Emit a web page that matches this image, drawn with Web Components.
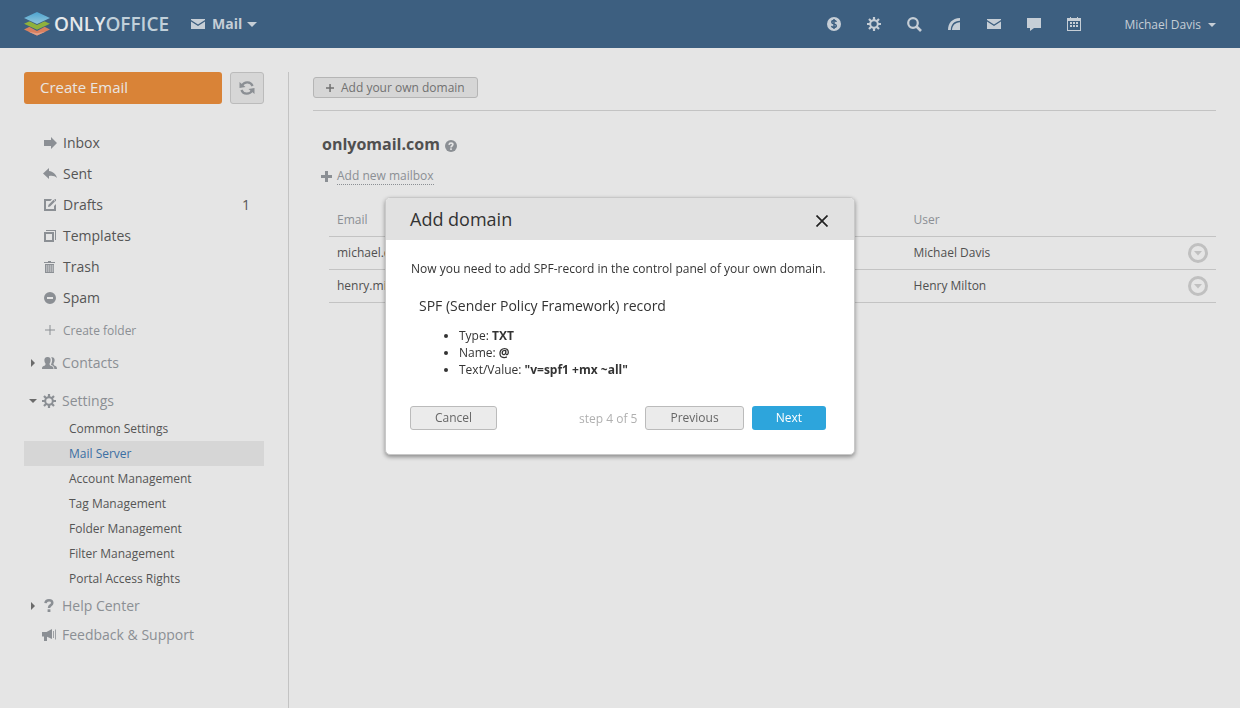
<!DOCTYPE html>
<html lang="en">
<head>
<meta charset="utf-8">
<title>Mail</title>
<style>
  body {
    margin: 0;
    background: #e5e5e5;
    color: #505050;
    font: 12px/17px "Open Sans", "Liberation Sans", sans-serif;
  }
</style>
</head>
<body>
<mail-app></mail-app>

<script>
// ---------- icons
const ICONS = {
  logo: ["0 0 26 24", `<path d="M0 17.500 13 11l13 6.500L13 23.500z" fill="#d9805f"/><path d="M4 19.400 13 23.500l9-4.100-9 1.800z" fill="#e0a08a"/><path d="M0 12 13 19 26 12 13 6z" fill="#3d5f80"/><path d="M0 11.800 13 17.800 26 11.800 13 6z" fill="#8fb13c"/><path d="M0 6.500 13 13 26 6.500 13 .5z" fill="#3d5f80"/><path d="M0 6 13 12 26 6 13 0z" fill="url(#blue)"/><defs><linearGradient id="blue" x2="0" y2="1"><stop stop-color="#4da3cf"/><stop offset="1" stop-color="#92c7dc"/></linearGradient></defs>`],
  mail: ["0 0 14 10", `<path d="M0 0h14v1L7 5.500 0 1zM0 2.500 7 7l7-4.500V10H0z"/>`],
  down: ["0 0 10 5", `<path d="M0 0h10L5 5z"/>`],
  smalldown: ["0 0 8 4", `<path d="M0 0h8L4 4z"/>`],
  dollar: ["0 0 14 14", `<circle cx="7" cy="7" r="7"/><path d="M9.300 5C9 3.900 8 3.600 7 3.600c-1.200 0-2.200.6-2.200 1.600C4.800 7.400 9.300 6.300 9.300 8.700c0 1.100-1 1.700-2.300 1.700S4.800 9.900 4.600 8.800M7 2v10" fill="none" stroke="#3d5f80" stroke-width="1.500"/>`],
  gear: ["0 0 14 14", `<circle cx="7" cy="7" r="3.800" fill="none" stroke="currentColor" stroke-width="2"/><path d="M7 0v3M7 11v3M0 7h3M11 7h3M2 2l2.200 2.200M9.800 9.800 12 12M12 2 9.800 4.200M4.200 9.800 2 12" fill="none" stroke="currentColor" stroke-width="2.200"/>`],
  search: ["0 0 15 15", `<circle cx="6" cy="6" r="4.800" fill="none" stroke="currentColor" stroke-width="2.200"/><path d="m9.500 9.500 4.500 4.500" stroke="currentColor" stroke-width="2.600"/>`],
  feed: ["0 0 12 12", `<path d="M0 12C0 5 4 .5 12 0v2.800C6 3 3 6.500 2.800 12zM4 12c.3-4.500 3-7.500 8-7.800V12z"/>`],
  chat: ["0 0 14 13", `<path d="M0 0h14v10H7l-4 3v-3H0z"/>`],
  calendar: ["0 0 14 14", `<path d="M0 1h3V0h1v1h6V0h1v1h3v13H0zm1 3v9h12V4z" fill-rule="evenodd"/><path d="M3 5h2v2H3zM6 5h2v2H6zM9 5h2v2H9zM3 8h2v2H3zM6 8h2v2H6zM9 8h2v2H9z"/>`],
  refresh: ["0 0 16 16", `<path d="M3 5.500A5.800 5.800 0 0 1 13.600 6M13 10.500A5.800 5.800 0 0 1 2.400 10" fill="none" stroke="currentColor" stroke-width="2.200"/><path d="M.5 2v6l6-1zM15.500 14V8l-6 1z"/>`],
  inbox: ["0 0 14 12", `<path d="M1 3h7V0l6 6-6 6V9H1z"/>`],
  sent: ["0 0 14 12", `<path d="M0 5.500 6 0v3c4 .5 7 3 8 7-2-2-4.500-2.500-8-2v3z"/>`],
  drafts: ["0 0 12 12", `<path d="M8 0H0v12h12V5l-2 2v3H2V2h4.500z"/><path d="m4 8 .5-2.200L9.500.8 11 2.400 6 7.400zM10 .4 12 0v2l-.4.400z"/>`],
  templates: ["0 0 12 12", `<path d="M2 0h10v10h-1V1H2zM0 2h10v10H0zm2 2v6h6V4z" fill-rule="evenodd"/>`],
  trash: ["0 0 12 12", `<path d="M4 0h3v1h4v1H0V1h4z"/><path d="M1 3h9v9H1zm1.500 1v7h.7V4zm2 0v7h.7V4zm2 0v7h.7V4zm2 0v7h.7V4z" fill-rule="evenodd"/>`],
  spam: ["0 0 12 12", `<path d="M6 0a6 6 0 1 0 0 12A6 6 0 0 0 6 0zM3 5h6v2H3z" fill-rule="evenodd"/>`],
  thinplus: ["0 0 10 10", `<path d="M4.500 0h1v4.500H10v1H5.500V10h-1V5.500H0v-1h4.500z"/>`],
  plus: ["0 0 8 8", `<path d="M3.300 0h1.500v3.300H8v1.500H4.800V8H3.300V4.800H0V3.300h3.300z"/>`],
  boldplus: ["0 0 11 11", `<path d="M4 0h3v4h4v3H7v4H4V7H0V4h4z"/>`],
  contacts: ["0 0 15 12", `<path d="M5.500 0C8 0 8.800 1.400 8.600 3.500 8.500 5 8 6 7.500 6.700c0 1.300.6 1.800 2 2.300 1.400.5 2 1 2 3H0c0-2 .4-2.500 1.600-3 1.400-.5 2-1 2-2.300C3 6 2.500 5 2.400 3.500 2.300 1.300 3.200 0 5.500 0z"/><path d="M9 .3c2.500-.6 3.800.8 3.600 3.200-.1 1.500-.6 2.300-1.100 2.900 0 1.300.4 1.800 1.500 2.300 1.400.6 2 1.300 2 3.300h-2.700c0-2.400-.8-3.200-3.300-4 0-.9 1-2.200 1.100-4.200C10.200 2.200 9.900 1 9 .3z"/>`],
  help: ["0 0 10 13", `<path d="M1.500 4.200C1.700 2.300 3 1.300 5 1.300s3.300 1 3.300 2.600C8.300 6.300 5 6 5 9" fill="none" stroke="currentColor" stroke-width="2.500"/><path d="M3.600 10.300h2.800V13H3.600z"/>`],
  horn: ["0 0 14 12", `<path d="M0 3h4.500L10 0v10L5 7.800V12H2V7.500H0z"/><path d="M11.500 2v7M13.500 .5v10" stroke="currentColor" stroke-width=".8" fill="none"/>`],
  right: ["0 0 4 8", `<path d="M0 0v8l4-4z"/>`],
  question: ["0 0 12 12", `<circle cx="6" cy="6" r="6"/><path d="M4 4.800C4.200 3.500 5 3.100 6 3.100s1.900.6 1.900 1.500C7.900 6 6 6 6 7.400M6 8.300V10" fill="none" stroke="#e5e5e5" stroke-width="1.600"/>`],
  action: ["0 0 20 20", `<circle cx="10" cy="10" r="8.500" fill="none" stroke="currentColor" stroke-width="3"/><path d="M6 8h8l-4 4.500z"/>`],
  close: ["0 0 12 12", `<path d="m.5.500 11 11M11.500.500.5 11.500" fill="none" stroke="currentColor" stroke-width="1.700"/>`]
};

class UiIcon extends HTMLElement {
  constructor() {
    super();
    const [box, shapes] = ICONS[this.getAttribute("name")];
    const [, , w, h] = box.split(" ");
    this.attachShadow({ mode: "open" }).innerHTML = `
      <style>
        :host { display: inline-flex; flex: none; align-items: center; justify-content: center; }
        svg { display: block; fill: currentColor; }
      </style>
      <svg width="${w}" height="${h}" viewBox="${box}" aria-hidden="true">${shapes}</svg>`;
  }
}
customElements.define("ui-icon", UiIcon);

// ---------- top bar
class TopBar extends HTMLElement {
  constructor() {
    super();
    this.attachShadow({ mode: "open" }).innerHTML = `
      <style>
        :host { display: flex; align-items: center; height: 48px; padding: 0 24px; background: #3d5f80; color: #c6ced6; }
        a { display: flex; align-items: center; color: inherit; text-decoration: none; }
        .logo { gap: 4px; font-size: 19px; line-height: 24px; font-weight: 600; }
        .logo b { font-weight: 600; color: #e5e8eb; }
        .logo span { color: #c1d0da; }
        .module { gap: 7px; margin-left: 22px; font-size: 14px; font-weight: 700; line-height: 20px; }
        .module ui-icon:last-child { margin-left: -2px; }
        nav { display: flex; margin-left: auto; }
        nav a { justify-content: center; width: 40px; height: 48px; }
        .user { gap: 7px; margin-left: 30px; padding-top: 2px; line-height: 20px; }
      </style>
      <a class="logo" href="#"><ui-icon name="logo"></ui-icon><div><b>ONLY</b><span>OFFICE</span></div></a>
      <a class="module" href="#"><ui-icon name="mail"></ui-icon>Mail<ui-icon name="down"></ui-icon></a>
      <nav>
        <a href="#" aria-label="Payments"><ui-icon name="dollar"></ui-icon></a>
        <a href="#" aria-label="Settings"><ui-icon name="gear"></ui-icon></a>
        <a href="#" aria-label="Search"><ui-icon name="search"></ui-icon></a>
        <a href="#" aria-label="Feed"><ui-icon name="feed"></ui-icon></a>
        <a href="#" aria-label="Mail"><ui-icon name="mail"></ui-icon></a>
        <a href="#" aria-label="Talk"><ui-icon name="chat"></ui-icon></a>
        <a href="#" aria-label="Calendar"><ui-icon name="calendar"></ui-icon></a>
      </nav>
      <a class="user" href="#">Michael Davis<ui-icon name="smalldown"></ui-icon></a>`;
  }
}
customElements.define("top-bar", TopBar);

// ---------- one line of the side menu
class MenuItem extends HTMLElement {
  constructor() {
    super();
    const icon = this.getAttribute("icon");
    const arrow = this.getAttribute("arrow");
    this.attachShadow({ mode: "open" }).innerHTML = `
      <style>
        :host { display: block; font-size: 14px; }
        a { display: flex; align-items: center; height: 31px; padding: 0 14px 0 16px; color: #555; text-decoration: none; }
        .icon { width: 20px; margin-right: 3px; color: #8b8f94; }
        .count { margin-left: auto; }
        .arrow { display: none; width: 17px; color: #6b6b6b; }
        :host([kind="group"]) a { height: 29px; padding-left: 0; color: #8b8f94; }
        :host([kind="group"]) .arrow { display: flex; justify-content: center; }
        :host([kind="group"]) .icon { width: 16px; margin-right: 5px; }
        :host([kind="add"]) { font-size: 12px; }
        :host([kind="add"]) a { height: 34px; color: #8b8f94; }
        :host([kind="sub"]) { font-size: 12px; }
        :host([kind="sub"]) a { height: 25px; padding-left: 45px; }
        :host([active]) a { background: #d6d6d6; color: #3b6fa3; }
      </style>
      <a href="#">
        <span class="arrow">${arrow ? `<ui-icon name="${arrow}"></ui-icon>` : ""}</span>
        ${icon ? `<ui-icon class="icon" name="${icon}"></ui-icon>` : ""}
        <slot></slot>
        <span class="count"><slot name="count"></slot></span>
      </a>`;
  }
}
customElements.define("menu-item", MenuItem);

class SideBar extends HTMLElement {
  constructor() {
    super();
    this.attachShadow({ mode: "open" }).innerHTML = `
      <style>
        :host { display: block; box-sizing: border-box; width: 265px; padding-right: 24px; border-right: 1px solid #c3c3c3; }
        .actions { display: flex; gap: 8px; margin-bottom: 23px; }
        button { box-sizing: border-box; height: 32px; border-radius: 3px; font-family: inherit; }
        .create { flex: 1; padding: 0 16px 2px; border: 0; background: #d98337; color: #e9e5e1; font-size: 15px; text-align: left; }
        .refresh { display: flex; align-items: center; justify-content: center; width: 34px; padding: 0; border: 1px solid #bbb; background: #d6d6d6; color: #8b8f94; }
        .contacts { margin: 1px 0 9px; }
        .settings { margin-bottom: 1px; }
      </style>
      <div class="actions">
        <button class="create">Create Email</button>
        <button class="refresh" aria-label="Refresh"><ui-icon name="refresh"></ui-icon></button>
      </div>
      <nav>
        <menu-item icon="inbox">Inbox</menu-item>
        <menu-item icon="sent">Sent</menu-item>
        <menu-item icon="drafts">Drafts<span slot="count">1</span></menu-item>
        <menu-item icon="templates">Templates</menu-item>
        <menu-item icon="trash">Trash</menu-item>
        <menu-item icon="spam">Spam</menu-item>
        <menu-item kind="add" icon="thinplus">Create folder</menu-item>
        <menu-item class="contacts" kind="group" icon="contacts" arrow="right">Contacts</menu-item>
        <menu-item class="settings" kind="group" icon="gear" arrow="smalldown">Settings</menu-item>
        <menu-item kind="sub">Common Settings</menu-item>
        <menu-item kind="sub" active>Mail Server</menu-item>
        <menu-item kind="sub">Account Management</menu-item>
        <menu-item kind="sub">Tag Management</menu-item>
        <menu-item kind="sub">Folder Management</menu-item>
        <menu-item kind="sub">Filter Management</menu-item>
        <menu-item kind="sub">Portal Access Rights</menu-item>
        <menu-item kind="group" icon="help" arrow="right">Help Center</menu-item>
        <menu-item kind="group" icon="horn">Feedback &amp; Support</menu-item>
      </nav>`;
  }
}
customElements.define("side-bar", SideBar);

// ---------- domain with its mailboxes
class DomainPage extends HTMLElement {
  constructor() {
    super();
    this.attachShadow({ mode: "open" }).innerHTML = `
      <style>
        :host { display: block; flex: 1; min-width: 0; }
        .bar { padding: 5px 0 12px; border-bottom: 1px solid #c3c3c3; }
        button { padding: 0; border: 0; background: none; color: inherit; font: inherit; }
        .bar button { display: flex; align-items: center; gap: 7px; height: 21px; padding: 0 12px; border: 1px solid #b5b5b5; border-radius: 3px; background: #d6d6d6; color: #717171; }
        h1 { display: flex; align-items: center; gap: 5px; margin: 21px 0 11px 9px; font-size: 16px; font-weight: 700; line-height: 24px; }
        h1 ui-icon { padding-top: 3px; color: #8b8f94; }
        .add { display: flex; align-items: center; gap: 5px; margin: 0 0 18px 8px; color: #8b8f94; text-decoration: none; }
        .add span { border-bottom: 1px dotted #8b8f94; }
        table { width: calc(100% - 16px); margin-left: 16px; border-collapse: collapse; table-layout: fixed; }
        th, td { box-sizing: border-box; height: 33px; padding: 0 8px; border-bottom: 1px solid #c3c3c3; text-align: left; font-weight: 400; }
        th { color: #8b8f94; }
        .email { width: 65%; }
        .act { width: 36px; color: #c0c0c0; }
        td button { display: flex; }
      </style>
      <div class="bar"><button><ui-icon name="plus"></ui-icon>Add your own domain</button></div>
      <h1>onlyomail.com<ui-icon name="question"></ui-icon></h1>
      <a class="add" href="#"><ui-icon name="boldplus"></ui-icon><span>Add new mailbox</span></a>
      <table>
        <thead>
          <tr><th class="email">Email</th><th>User</th><th class="act"></th></tr>
        </thead>
        <tbody>
          <tr><td>michael.davis@onlyomail.com</td><td>Michael Davis</td><td class="act"><button aria-label="Actions"><ui-icon name="action"></ui-icon></button></td></tr>
          <tr><td>henry.milton@onlyomail.com</td><td>Henry Milton</td><td class="act"><button aria-label="Actions"><ui-icon name="action"></ui-icon></button></td></tr>
        </tbody>
      </table>`;
  }
}
customElements.define("domain-page", DomainPage);

// ---------- wizard window
class WizardDialog extends HTMLElement {
  constructor() {
    super();
    this.attachShadow({ mode: "open" }).innerHTML = `
      <style>
        :host { position: fixed; inset: 0; display: flex; align-items: flex-start; justify-content: center; padding: 197px 24px 0; }
        section { box-sizing: border-box; width: 470px; border: 1px solid #c8c8c8; border-radius: 5px; background: #fff; color: #333; box-shadow: 0 2px 4px rgba(0, 0, 0, .4); overflow: hidden; }
        header { display: flex; align-items: center; justify-content: space-between; height: 42px; padding: 0 26px 0 24px; background: #e1e1e1; }
        h2 { margin: 0; font-size: 18px; font-weight: 400; line-height: 24px; }
        button { font: inherit; }
        .close { display: flex; padding: 3px 0 0; border: 0; background: none; color: #222; }
        .body { padding: 20px 24px 24px; }
        footer { display: flex; align-items: center; gap: 8px; margin: 28px 4px 0 0; }
        footer button { box-sizing: border-box; height: 24px; padding: 0 24px 1px; border: 1px solid #bbb; border-radius: 3px; background: #ebebeb; color: #666; }
        footer .next { border: 0; background: #2da5dc; color: #fff; }
        .step { margin-left: auto; color: #b0b0b0; }
      </style>
      <section role="dialog" aria-labelledby="title">
        <header>
          <h2 id="title"><slot name="title"></slot></h2>
          <button class="close" aria-label="Close"><ui-icon name="close"></ui-icon></button>
        </header>
        <div class="body">
          <slot></slot>
          <footer>
            <button>Cancel</button>
            <span class="step"><slot name="step"></slot></span>
            <button>Previous</button>
            <button class="next">Next</button>
          </footer>
        </div>
      </section>`;
  }
}
customElements.define("wizard-dialog", WizardDialog);

class MailApp extends HTMLElement {
  constructor() {
    super();
    this.attachShadow({ mode: "open" }).innerHTML = `
      <style>
        :host { display: flex; flex-direction: column; min-height: 100vh; }
        main { display: flex; flex: 1; gap: 24px; padding: 24px 24px 0; }
        p { margin: 0 1px; }
        h3 { margin: 19px 9px 11px; font-size: 14px; font-weight: 400; line-height: 20px; }
        ul { margin: 0; padding-left: 49px; }
      </style>
      <top-bar></top-bar>
      <main>
        <side-bar></side-bar>
        <domain-page></domain-page>
      </main>
      <wizard-dialog>
        <span slot="title">Add domain</span>
        <p>Now you need to add SPF-record in the control panel of your own domain.</p>
        <h3>SPF (Sender Policy Framework) record</h3>
        <ul>
          <li>Type: <b>TXT</b></li>
          <li>Name: <b>@</b></li>
          <li>Text/Value: <b>"v=spf1 +mx ~all"</b></li>
        </ul>
        <span slot="step">step 4 of 5</span>
      </wizard-dialog>`;
  }
}
customElements.define("mail-app", MailApp);
</script>
</body>
</html>
